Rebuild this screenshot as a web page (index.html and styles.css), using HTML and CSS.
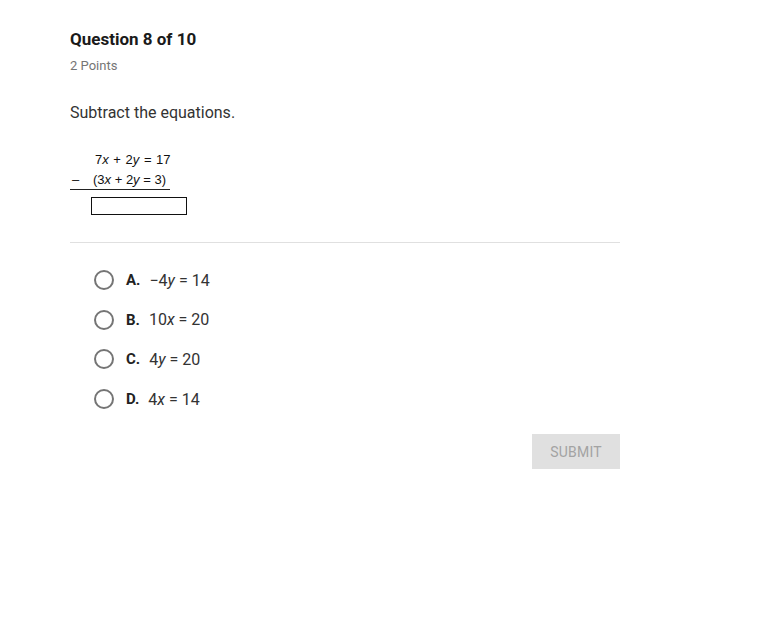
FILE: index.html
```html
<!DOCTYPE html>
<html>
<head>
<meta charset="utf-8">
<link rel="stylesheet" href="styles.css">
</head>
<body>
<div class="page">
  <h1 class="title">Question 8 of 10</h1>
  <div class="points">2 Points</div>
  <p class="prompt">Subtract the equations.</p>
  <div class="equation">
    <div class="eq-row first"><span class="minus"></span><span class="eq">7<i>x</i> + 2<i>y</i> = 17</span></div>
    <div class="eq-row second"><span class="minus">–</span><span class="eq">(3<i>x</i> + 2<i>y</i> = 3)</span></div>
    <div class="answer-box"></div>
  </div>
  <hr class="divider">
  <ul class="options">
    <li class="option"><span class="radio"></span><b>A.</b><span class="ans">−4<i>y</i> = 14</span></li>
    <li class="option"><span class="radio"></span><b>B.</b><span class="ans">10<i>x</i> = 20</span></li>
    <li class="option"><span class="radio"></span><b>C.</b><span class="ans">4<i>y</i> = 20</span></li>
    <li class="option"><span class="radio"></span><b>D.</b><span class="ans">4<i>x</i> = 14</span></li>
  </ul>
  <div class="actions"><button class="submit">SUBMIT</button></div>
</div>
</body>
</html>
```
FILE: styles.css
```css
* { box-sizing: border-box; }
html, body { margin: 0; padding: 0; background: #fff; }
body { font-family: Roboto, "Noto Sans", sans-serif; color: #212121; }
.page { width: 550px; margin-left: 70px; padding-top: 29px; }
.title { font-size: 17px; font-weight: 700; margin: 0; line-height: 20px; color: #1a1a1a; }
.points { font-size: 13px; color: #757575; margin-top: 9px; line-height: 16px; }
.prompt { font-size: 16px; color: #333; margin: 30px 0 0; line-height: 18px; }
.equation { margin-top: 28px; font-family: "Liberation Sans", Arial, sans-serif; font-size: 13px; color: #111; }
.eq-row { display: flex; line-height: 20px; }
.eq-row.first { margin-bottom: 1px; padding-left: 2px; word-spacing: 1px; }
.minus { width: 23px; padding-left: 2px; }
.eq-row.second { width: 100px; border-bottom: 1px solid #222; line-height: 18px; }
.eq i { font-style: italic; }
.answer-box { margin-left: 21px; margin-top: 7px; width: 96px; height: 18px; border: 1px solid #111; }
.divider { border: 0; border-top: 1px solid #e0e0e0; margin: 27px 0 0; }
.options { list-style: none; padding: 0 0 0 24px; margin: 27px 0 0; }
.option { display: flex; align-items: center; height: 20px; margin-bottom: 19.7px; font-size: 16px; color: #333; }
.radio { width: 20px; height: 20px; border: 2px solid #757575; border-radius: 50%; margin-right: 12px; }
.option b { font-weight: 700; font-size: 15px; color: #222; margin-right: 9px; }
.option i { font-style: italic; }
.actions { display: flex; justify-content: flex-end; margin-top: 25px; }
.submit { width: 88px; height: 35px; border: 0; background: #e0e0e0; color: #a3a3a3; font-family: Roboto, sans-serif; font-size: 14px; letter-spacing: 0.2px; }
```
